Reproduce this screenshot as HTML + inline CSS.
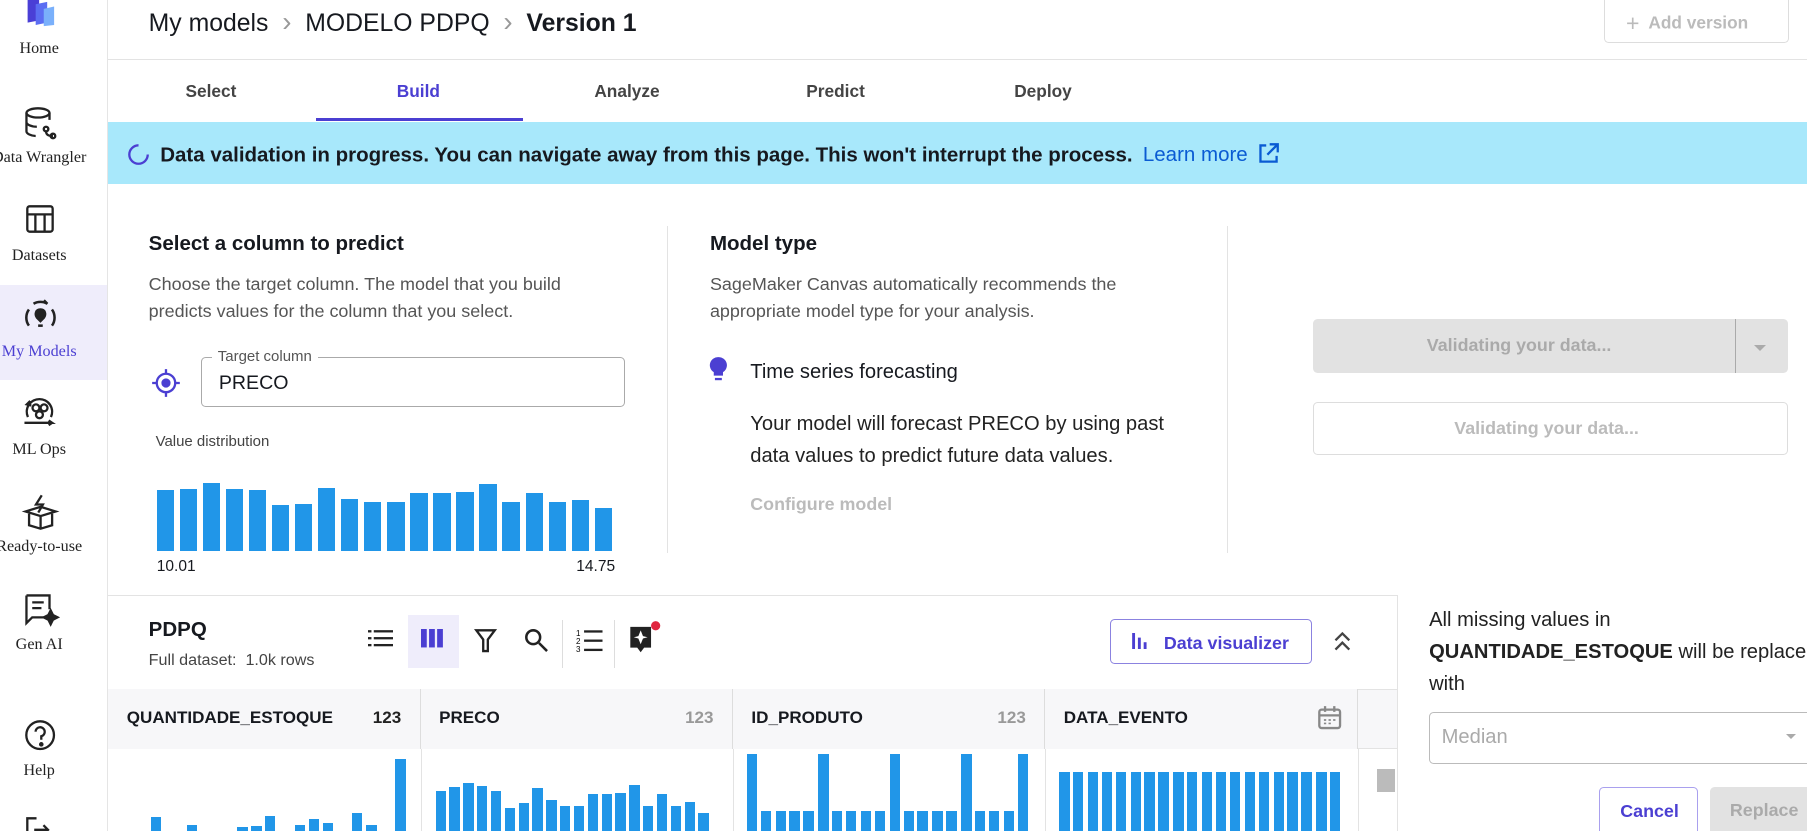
<!DOCTYPE html>
<html><head><meta charset="utf-8"><style>
*{box-sizing:border-box;margin:0;padding:0}
html,body{width:1807px;height:831px;overflow:hidden;background:#fff}
#w{width:1568px;height:721px;position:relative;zoom:1.1525;font-family:"Liberation Sans",sans-serif;color:#16191f;overflow:hidden}
.a{position:absolute}
.sb{left:0;top:0;width:94px;height:721px;border-right:1px solid #e5e5e5}
.sl{position:absolute;left:-16px;width:100px;text-align:center;font-family:"Liberation Serif",serif;font-size:14px;color:#222;white-space:nowrap}
.ic{position:absolute;left:33px}
.tab{position:absolute;top:70px;font-size:15px;font-weight:bold;color:#444;transform:translateX(-50%)}
.g{color:#555;font-size:15.6px;line-height:24px;white-space:nowrap}
.bar{position:absolute;bottom:0;background:#2196e8;width:15px}
.th{position:absolute;top:598px;height:52px;border-right:1px solid #ddd;background:#f7f7f9;font-size:14.8px;font-weight:bold;padding:16px 16px}
.th span{float:right;color:#999}
</style></head><body><div id="w">
<div class="a sb">
<svg class="ic" style="left:20px;top:-4px" width="30" height="28"><path d="M4 4 L14 2 L14 22 L4 24Z" fill="#4a3fd6"/><path d="M11 8 L21 6 L21 24 L11 26Z" fill="#5b6df2"/><path d="M18 12 L27 10 L27 26 L18 27Z" fill="#7ab0fb"/></svg>
<div class="sl" style="top:35px">Home</div>
<svg class="ic" style="left:20px;top:92px" width="30" height="30" fill="none" stroke="#222" stroke-width="2"><ellipse cx="13" cy="6" rx="10" ry="4"/><path d="M3 6v16c0 2 4 4 8 4M23 6v6M3 14c0 2 4 4 9 4"/><circle cx="20" cy="20" r="2"/><circle cx="26" cy="26" r="2"/><path d="M20 22c0 4 4 4 6 4"/></svg>
<div class="sl" style="top:129px">Data Wrangler</div>
<svg class="ic" style="left:22px;top:177px" width="26" height="26" fill="none" stroke="#222" stroke-width="2"><rect x="2" y="2" width="22" height="22" rx="2"/><path d="M2 9h22M9 9v15M17 9v15"/></svg>
<div class="sl" style="top:214px">Datasets</div>
<div class="a" style="left:0;top:247px;width:93px;height:83px;background:#efedfb"></div>
<svg class="ic" style="left:19px;top:259px" width="32" height="32" fill="none" stroke="#222" stroke-width="2.2"><path d="M6 10a12 12 0 0 0 0 14M26 10a12 12 0 0 1 0 14M10 5a12 12 0 0 1 12 0l-3-3"/><path d="M16 10c4 0 5 4 3 7l-3 3-3-3c-2-3-1-7 3-7z" fill="#222"/><path d="M14 24h4"/></svg>
<div class="sl" style="top:298px;color:#4b3fd2">My Models</div>
<svg class="ic" style="left:18px;top:342px" width="34" height="30" fill="none" stroke="#222" stroke-width="2"><path d="M6 20a11 11 0 1 1 20 0M8 6l-3 3 4 1"/><circle cx="13" cy="12" r="3"/><circle cx="20" cy="12" r="3"/><circle cx="16" cy="18" r="3"/><path d="M3 25h24l-3-2m3 2-3 2"/></svg>
<div class="sl" style="top:383px">ML Ops</div>
<svg class="ic" style="left:18px;top:428px" width="34" height="32" fill="none" stroke="#222" stroke-width="2"><path d="M18 2l-5 8h6l-4 7" /><path d="M4 16l13-4 13 4-13 4zM7 18v10l10 3 10-3V18M17 20v11"/></svg>
<div class="sl" style="top:467px">Ready-to-use</div>
<svg class="ic" style="left:20px;top:514px" width="32" height="30" fill="none" stroke="#222" stroke-width="2"><path d="M3 3h20v12M3 3v24l5-5h10"/><path d="M8 9h10M8 14h8"/><path d="M24 16l2 4 4 2-4 2-2 4-2-4-4-2 4-2z" fill="#222"/></svg>
<div class="sl" style="top:552px">Gen AI</div>
<svg class="ic" style="left:21px;top:624px" width="30" height="30" fill="none" stroke="#222" stroke-width="2"><circle cx="14" cy="14" r="12"/><path d="M10 11a4 4 0 1 1 5 4v3"/><circle cx="15" cy="22" r="1" fill="#222"/></svg>
<div class="sl" style="top:661px">Help</div>
<svg class="ic" style="left:22px;top:708px" width="26" height="20" fill="none" stroke="#222" stroke-width="2"><path d="M10 2H2v18M16 8l4 4-4 4M8 12h12"/></svg>
</div>
<div class="a" style="left:129px;top:5px;font-size:21.5px;white-space:nowrap">My models <span style="color:#999;margin:0 6px;font-size:24px">›</span> MODELO PDPQ <span style="color:#999;margin:0 6px;font-size:24px">›</span> <b>Version 1</b></div>
<div class="a" style="left:1392px;top:0;width:160px;height:37px;border:1px solid #ddd;border-top:none;border-radius:0 0 4px 4px;color:#bbb;font-size:15px;font-weight:bold;padding:9px 0 0 18px"><span style="font-weight:normal;font-size:20px;vertical-align:-2px">+</span>&nbsp; Add version</div>
<div class="a" style="left:94px;top:51px;width:1474px;border-top:1px solid #e3e3e3"></div>
<div class="tab" style="left:183px">Select</div>
<div class="tab" style="left:363px;color:#4b3fd2">Build</div>
<div class="a" style="left:274px;top:102px;width:180px;height:3px;background:#4b3fd2"></div>
<div class="tab" style="left:544px">Analyze</div>
<div class="tab" style="left:725px">Predict</div>
<div class="tab" style="left:905px">Deploy</div>
<div class="a" style="left:94px;top:106px;width:1474px;height:54px;background:#a8e8fb"></div>
<svg class="a" style="left:110px;top:124px" width="20" height="20" fill="none" stroke="#4b3fd2" stroke-width="2"><path d="M10 2a8 8 0 1 0 8 8"/></svg>
<div class="a" style="left:139px;top:123px;font-size:17.8px;font-weight:bold;white-space:nowrap">Data validation in progress. You can navigate away from this page. This won't interrupt the process. <span style="font-weight:normal;color:#0a5bd3;margin-left:4px">Learn more</span> <svg width="20" height="20" style="vertical-align:-3px;margin-left:3px" fill="none" stroke="#0a5bd3" stroke-width="2"><path d="M8 3H3v14h14v-5M11 2h7v7M18 2l-9 9"/></svg></div>
<div class="a" style="left:129px;top:201px;font-size:17.8px;font-weight:bold">Select a column to predict</div>
<div class="a g" style="left:129px;top:235px">Choose the target column. The model that you build<br>predicts values for the column that you select.</div>
<svg class="a" style="left:131px;top:319px" width="26" height="26" fill="none" stroke="#4b3fd2" stroke-width="2"><circle cx="13" cy="13" r="8"/><circle cx="13" cy="13" r="3" fill="#4b3fd2"/><path d="M13 1v4M13 21v4M1 13h4M21 13h4"/></svg>
<div class="a" style="left:174px;top:310px;width:368px;height:43px;border:1px solid #aaa;border-radius:4px;padding:12px 15px;font-size:17px">PRECO</div>
<div class="a" style="left:184px;top:302px;background:#fff;padding:0 5px;font-size:13px;color:#555">Target column</div>
<div class="a" style="left:135px;top:376px;font-size:13px;color:#444">Value distribution</div>
<div class="a" style="left:136px;top:410px;width:400px;height:68px">
<div class="bar" style="left:0;height:53px"></div><div class="bar" style="left:20px;height:54px"></div><div class="bar" style="left:40px;height:59px"></div><div class="bar" style="left:60px;height:54px"></div><div class="bar" style="left:80px;height:53px"></div><div class="bar" style="left:100px;height:40px"></div><div class="bar" style="left:120px;height:41px"></div><div class="bar" style="left:140px;height:55px"></div><div class="bar" style="left:160px;height:45px"></div><div class="bar" style="left:180px;height:42px"></div><div class="bar" style="left:200px;height:42px"></div><div class="bar" style="left:220px;height:50px"></div><div class="bar" style="left:240px;height:50px"></div><div class="bar" style="left:260px;height:51px"></div><div class="bar" style="left:280px;height:58px"></div><div class="bar" style="left:300px;height:42px"></div><div class="bar" style="left:320px;height:50px"></div><div class="bar" style="left:340px;height:42px"></div><div class="bar" style="left:360px;height:44px"></div><div class="bar" style="left:380px;height:37px"></div>
</div>
<div class="a" style="left:136px;top:484px;font-size:13.5px">10.01</div>
<div class="a" style="left:500px;top:484px;font-size:13.5px">14.75</div>
<div class="a" style="left:579px;top:196px;height:284px;border-left:1px solid #e3e3e3"></div>
<div class="a" style="left:616px;top:201px;font-size:17.8px;font-weight:bold">Model type</div>
<div class="a g" style="left:616px;top:235px">SageMaker Canvas automatically recommends the<br>appropriate model type for your analysis.</div>
<svg class="a" style="left:614px;top:309px" width="18" height="24"><path d="M9 1a7 7 0 0 0-4 13v3h8v-3A7 7 0 0 0 9 1z" fill="#4b3fd2"/><rect x="6" y="19" width="6" height="2" fill="#4b3fd2"/></svg>
<div class="a" style="left:651px;top:313px;font-size:17.5px">Time series forecasting</div>
<div class="a" style="left:651px;top:354px;font-size:17.5px;line-height:28px;color:#222;white-space:nowrap">Your model will forecast PRECO by using past<br>data values to predict future data values.</div>
<div class="a" style="left:651px;top:429px;font-size:15.5px;font-weight:bold;color:#bbb">Configure model</div>
<div class="a" style="left:1065px;top:196px;height:284px;border-left:1px solid #e3e3e3"></div>
<div class="a" style="left:1139px;top:277px;width:412px;height:47px;background:#e2e2e2;border-radius:4px;font-size:15.5px;font-weight:bold;color:#aaa;padding:14px 0 0 99px">Validating your data...</div>
<div class="a" style="left:1505px;top:277px;height:47px;border-left:1px solid #aaa"></div>
<div class="a" style="left:1522px;top:299px;border:6px solid transparent;border-top-color:#aaa"></div>
<div class="a" style="left:1139px;top:349px;width:412px;height:46px;border:1px solid #ddd;border-radius:4px;font-size:15.5px;font-weight:bold;color:#bbb;padding:13px 0 0 122px">Validating your data...</div>
<div class="a" style="left:94px;top:516px;width:1118px;border-top:1px solid #e3e3e3"></div>
<div class="a" style="left:1212px;top:516px;height:205px;border-left:1px solid #e3e3e3"></div>
<div class="a" style="left:129px;top:536px;font-size:17.8px;font-weight:bold">PDPQ</div>
<div class="a" style="left:129px;top:565px;font-size:14px;color:#444">Full dataset:&nbsp; 1.0k rows</div>
<div class="a" style="left:354px;top:534px;width:44px;height:46px;background:#efedfb"></div>
<svg class="a" style="left:319px;top:546px" width="22" height="16" fill="#222"><rect x="0" y="1" width="3" height="2"/><rect x="5" y="1" width="17" height="2"/><rect x="0" y="7" width="3" height="2"/><rect x="5" y="7" width="17" height="2"/><rect x="0" y="13" width="3" height="2"/><rect x="5" y="13" width="17" height="2"/></svg>
<svg class="a" style="left:365px;top:546px" width="22" height="16" fill="#4b3fd2"><rect x="0" y="0" width="5" height="16"/><rect x="7" y="0" width="5" height="16"/><rect x="14" y="0" width="5" height="16"/></svg>
<svg class="a" style="left:411px;top:545px" width="20" height="22" fill="none" stroke="#222" stroke-width="2"><path d="M2 2h16l-6 8v10h-4V10z"/></svg>
<svg class="a" style="left:455px;top:545px" width="22" height="22" fill="none" stroke="#222" stroke-width="2.2"><circle cx="8" cy="8" r="6"/><path d="M13 13l7 7"/></svg>
<div class="a" style="left:488px;top:538px;height:42px;border-left:1px solid #ddd"></div>
<div class="a" style="left:533px;top:538px;height:42px;border-left:1px solid #ddd"></div>
<svg class="a" style="left:500px;top:545px" width="24" height="22"><text x="0" y="7" font-size="7" font-family="Liberation Sans">1</text><text x="0" y="14" font-size="7" font-family="Liberation Sans">2</text><text x="0" y="21" font-size="7" font-family="Liberation Sans">3</text><rect x="7" y="2" width="16" height="2" fill="#222"/><rect x="7" y="10" width="16" height="2" fill="#222"/><rect x="7" y="18" width="16" height="2" fill="#222"/></svg>
<svg class="a" style="left:545px;top:538px" width="30" height="32"><path d="M2 6h18v18h-6l-3 4-3-4H2z" fill="#222"/><path d="M11 9l2 5 4 1-4 1-2 5-2-5-4-1 4-1z" fill="#fff"/><circle cx="24" cy="5" r="4" fill="#e0253f"/></svg>
<div class="a" style="left:963px;top:537px;width:175px;height:39px;border:1px solid #8b82e0;border-radius:4px;color:#4b3fd2;font-size:15.5px;font-weight:bold;padding:11px 0 0 46px;white-space:nowrap">Data visualizer</div>
<svg class="a" style="left:981px;top:549px" width="16" height="14" fill="#4b3fd2"><rect x="1" y="0" width="2.5" height="14"/><rect x="6" y="4" width="2.5" height="10"/><rect x="11" y="8" width="2.5" height="6"/></svg>
<svg class="a" style="left:1156px;top:547px" width="18" height="20" fill="none" stroke="#444" stroke-width="2"><path d="M3 9l6-6 6 6M3 17l6-6 6 6"/></svg>
<div class="a" style="left:94px;top:598px;width:1118px;height:52px;background:#f7f7f9;border-top:1px solid #e3e3e3;border-bottom:1px solid #e3e3e3"></div>
<div class="th" style="left:94px;width:271px">QUANTIDADE_ESTOQUE<span style="color:#222">123</span></div>
<div class="th" style="left:365px;width:271px">PRECO<span>123</span></div>
<div class="th" style="left:636px;width:271px">ID_PRODUTO<span>123</span></div>
<div class="th" style="left:907px;width:271px">DATA_EVENTO</div>
<svg class="a" style="left:1143px;top:612px" width="22" height="22" fill="none" stroke="#888" stroke-width="2"><rect x="2" y="4" width="18" height="16" rx="2"/><path d="M2 9h18M7 1v5M15 1v5"/><path d="M6 13h2M10 13h2M14 13h2M6 16h2M10 16h2" stroke-width="1.5"/></svg>
<div class="a" style="left:365px;top:650px;height:71px;border-left:1px solid #e3e3e3"></div>
<div class="a" style="left:636px;top:650px;height:71px;border-left:1px solid #e3e3e3"></div>
<div class="a" style="left:907px;top:650px;height:71px;border-left:1px solid #e3e3e3"></div>
<div class="a" style="left:1178px;top:650px;width:34px;height:71px;border-left:1px solid #e3e3e3"></div>
<div class="a" style="left:1195px;top:667px;width:15px;height:20px;background:#bbb"></div>
<div class="a" style="left:110px;top:650px;width:245px;height:71px">
<div class="bar" style="left:21px;width:9px;height:12px"></div><div class="bar" style="left:52px;width:9px;height:5px"></div><div class="bar" style="left:96px;width:9px;height:3px"></div><div class="bar" style="left:108px;width:9px;height:4px"></div><div class="bar" style="left:120px;width:9px;height:13px"></div><div class="bar" style="left:146px;width:9px;height:5px"></div><div class="bar" style="left:158px;width:9px;height:10px"></div><div class="bar" style="left:170px;width:9px;height:7px"></div><div class="bar" style="left:195px;width:9px;height:16px"></div><div class="bar" style="left:208px;width:9px;height:5px"></div><div class="bar" style="left:233px;width:9px;height:62px"></div>
</div>
<div class="a" style="left:378px;top:650px;width:250px;height:71px">
<div class="bar" style="left:0;width:9px;height:35px"></div><div class="bar" style="left:12px;width:9px;height:38px"></div><div class="bar" style="left:24px;width:9px;height:42px"></div><div class="bar" style="left:36px;width:9px;height:39px"></div><div class="bar" style="left:48px;width:9px;height:35px"></div><div class="bar" style="left:60px;width:9px;height:20px"></div><div class="bar" style="left:72px;width:9px;height:24px"></div><div class="bar" style="left:84px;width:9px;height:37px"></div><div class="bar" style="left:96px;width:9px;height:27px"></div><div class="bar" style="left:108px;width:9px;height:22px"></div><div class="bar" style="left:120px;width:9px;height:22px"></div><div class="bar" style="left:132px;width:9px;height:32px"></div><div class="bar" style="left:144px;width:9px;height:32px"></div><div class="bar" style="left:156px;width:9px;height:33px"></div><div class="bar" style="left:168px;width:9px;height:40px"></div><div class="bar" style="left:180px;width:9px;height:22px"></div><div class="bar" style="left:192px;width:9px;height:32px"></div><div class="bar" style="left:204px;width:9px;height:22px"></div><div class="bar" style="left:216px;width:9px;height:25px"></div><div class="bar" style="left:228px;width:9px;height:16px"></div>
</div>
<div class="a" style="left:648px;top:650px;width:250px;height:71px">
<div class="bar" style="left:0;width:9px;height:67px"></div><div class="bar" style="left:12px;width:9px;height:17px"></div><div class="bar" style="left:25px;width:9px;height:17px"></div><div class="bar" style="left:37px;width:9px;height:17px"></div><div class="bar" style="left:49px;width:9px;height:17px"></div><div class="bar" style="left:62px;width:9px;height:67px"></div><div class="bar" style="left:74px;width:9px;height:17px"></div><div class="bar" style="left:86px;width:9px;height:17px"></div><div class="bar" style="left:99px;width:9px;height:17px"></div><div class="bar" style="left:111px;width:9px;height:17px"></div><div class="bar" style="left:124px;width:9px;height:67px"></div><div class="bar" style="left:136px;width:9px;height:17px"></div><div class="bar" style="left:148px;width:9px;height:17px"></div><div class="bar" style="left:161px;width:9px;height:17px"></div><div class="bar" style="left:173px;width:9px;height:17px"></div><div class="bar" style="left:186px;width:9px;height:67px"></div><div class="bar" style="left:198px;width:9px;height:17px"></div><div class="bar" style="left:210px;width:9px;height:17px"></div><div class="bar" style="left:223px;width:9px;height:17px"></div><div class="bar" style="left:235px;width:9px;height:67px"></div>
</div>
<div class="a" style="left:919px;top:650px;width:250px;height:71px">
<div class="bar" style="left:0;width:9px;height:51px"></div><div class="bar" style="left:12px;width:9px;height:51px"></div><div class="bar" style="left:25px;width:9px;height:51px"></div><div class="bar" style="left:37px;width:9px;height:51px"></div><div class="bar" style="left:49px;width:9px;height:51px"></div><div class="bar" style="left:62px;width:9px;height:51px"></div><div class="bar" style="left:74px;width:9px;height:51px"></div><div class="bar" style="left:86px;width:9px;height:51px"></div><div class="bar" style="left:99px;width:9px;height:51px"></div><div class="bar" style="left:111px;width:9px;height:51px"></div><div class="bar" style="left:124px;width:9px;height:51px"></div><div class="bar" style="left:136px;width:9px;height:51px"></div><div class="bar" style="left:148px;width:9px;height:51px"></div><div class="bar" style="left:161px;width:9px;height:51px"></div><div class="bar" style="left:173px;width:9px;height:51px"></div><div class="bar" style="left:186px;width:9px;height:51px"></div><div class="bar" style="left:198px;width:9px;height:51px"></div><div class="bar" style="left:210px;width:9px;height:51px"></div><div class="bar" style="left:223px;width:9px;height:51px"></div><div class="bar" style="left:235px;width:9px;height:51px"></div>
</div>
<div class="a" style="left:1240px;top:524px;font-size:17.5px;line-height:28px;white-space:nowrap;color:#222">All missing values in<br><b>QUANTIDADE_ESTOQUE</b> will be replaced<br>with</div>
<div class="a" style="left:1240px;top:618px;width:340px;height:45px;border:1px solid #bbb;border-radius:4px;font-size:17.5px;color:#aaa;padding:11px 0 0 10px">Median</div>
<div class="a" style="left:1550px;top:637px;border:5px solid transparent;border-top-color:#aaa"></div>
<div class="a" style="left:1387px;top:683px;width:86px;height:45px;border:1px solid #a9a0ee;border-radius:4px;color:#4b3fd2;font-size:15.5px;font-weight:bold;padding:11px 0 0 18px">Cancel</div>
<div class="a" style="left:1484px;top:683px;width:100px;height:45px;background:#e2e2e2;border-radius:4px;color:#aaa;font-size:15.5px;font-weight:bold;padding:11px 0 0 17px">Replace</div>
</div></body></html>
